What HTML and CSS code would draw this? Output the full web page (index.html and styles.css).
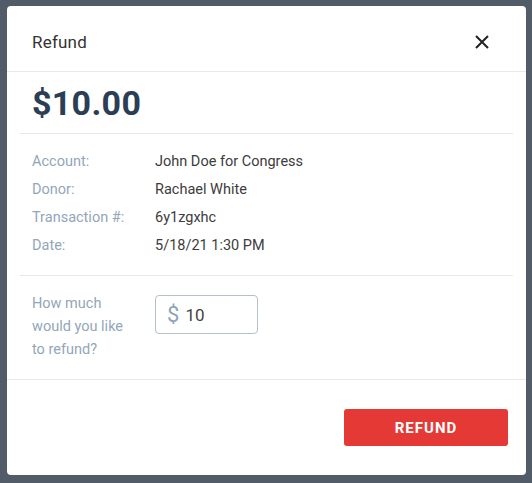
FILE: index.html
```html
<!DOCTYPE html>
<html lang="en">
<head>
  <meta charset="UTF-8">
  <title>Refund</title>
  <link rel="stylesheet" href="styles.css">
</head>
<body>
  <div class="modal">
    <div class="modal-header">
      <h2>Refund</h2>
      <button class="close-btn" aria-label="Close">
        <svg width="14" height="14" viewBox="0 0 14 14"><path d="M1 1 L13 13 M13 1 L1 13" stroke="#222" stroke-width="2" fill="none"/></svg>
      </button>
    </div>

    <div class="modal-body">
      <div class="amount">$10.00</div>

      <dl class="details">
        <dt>Account:</dt><dd>John Doe for Congress</dd>
        <dt>Donor:</dt><dd>Rachael White</dd>
        <dt>Transaction #:</dt><dd>6y1zgxhc</dd>
        <dt>Date:</dt><dd>5/18/21 1:30 PM</dd>
      </dl>

      <div class="refund-row">
        <label class="refund-label" for="refundAmount">How much would you like to refund?</label>
        <div class="money-input">
          <span class="currency">$</span>
          <input id="refundAmount" type="text" value="10">
        </div>
      </div>
    </div>

    <div class="modal-footer">
      <button class="btn-refund">Refund</button>
    </div>
  </div>
</body>
</html>
```

FILE: styles.css
```css
* {
  margin: 0;
  padding: 0;
  box-sizing: border-box;
  font-family: Roboto, 'Liberation Sans', sans-serif;
}

body {
  background: #525c68;
  padding: 6px 6px 8px 7px;
  min-height: 100vh;
}

.modal {
  width: 519px;
  height: 469px;
  background: #fff;
  border-radius: 4px;
  display: flex;
  flex-direction: column;
}

.modal-header {
  height: 66px;
  display: flex;
  align-items: center;
  justify-content: space-between;
  padding: 0 37px 0 25px;
  border-bottom: 1px solid #e6e8ea;
}

.modal-header h2 {
  font-size: 17px;
  font-weight: 400;
  color: #333;
  margin-top: 7px;
  letter-spacing: 0.2px;
}

.close-btn {
  border: none;
  background: none;
  cursor: pointer;
  display: flex;
  margin-top: 6px;
}

.modal-body {
  padding: 0 13px;
}

.amount {
  height: 62px;
  padding: 11px 0 0 12px;
  font-size: 34px;
  font-weight: 700;
  letter-spacing: 0.3px;
  color: #2b3e55;
  border-bottom: 1px solid #e6e8ea;
}

/* Transaction details */
.details {
  display: grid;
  grid-template-columns: 123px 1fr;
  padding: 14px 12px 15px;
  border-bottom: 1px solid #e6e8ea;
  font-size: 14.5px;
  line-height: 28px;
}

.details dt {
  color: #93a6ba;
}

.details dd {
  color: #3c3c3c;
}

/* Refund amount */
.refund-row {
  display: flex;
  align-items: flex-start;
  height: 103px;
  padding: 16px 12px 0;
}

.refund-label {
  width: 123px;
  padding-right: 25px;
  font-size: 14.5px;
  line-height: 23px;
  color: #93a6ba;
}

.money-input {
  width: 103px;
  height: 39px;
  margin-top: 3px;
  border: 1px solid #b5c0ca;
  border-radius: 4px;
  display: flex;
  align-items: center;
  padding-left: 11px;
}

.currency {
  font-size: 22px;
  color: #8ea4b9;
  margin-right: 6px;
}

.money-input input {
  border: none;
  outline: none;
  width: 60px;
  font-size: 17px;
  color: #444;
  background: transparent;
}

.modal-footer {
  border-top: 1px solid #e6e8ea;
  display: flex;
  justify-content: flex-end;
  padding: 29px 18px 0;
}

.btn-refund {
  width: 164px;
  height: 37px;
  border: none;
  border-radius: 3px;
  background: #e53935;
  color: #fff;
  font-size: 15px;
  font-weight: 700;
  letter-spacing: 1px;
  text-transform: uppercase;
  cursor: pointer;
}
```
